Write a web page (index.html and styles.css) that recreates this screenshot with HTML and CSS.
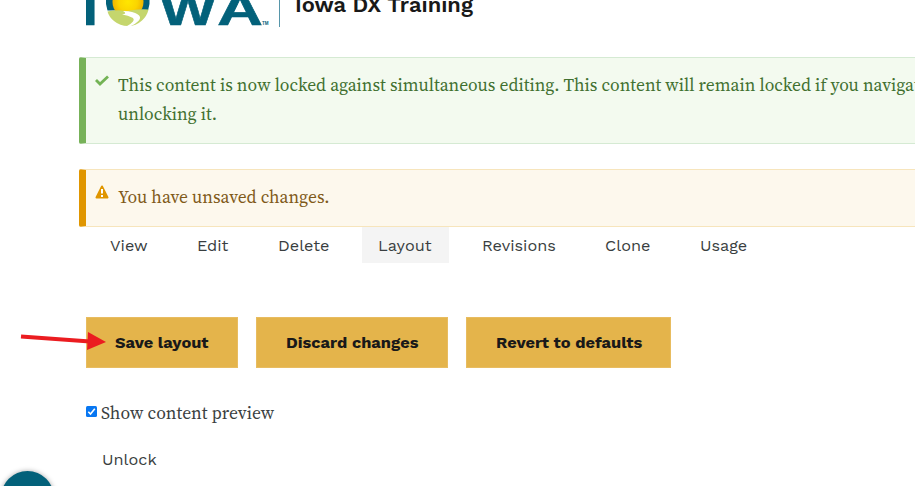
FILE: index.html
```
<!DOCTYPE html>
<html lang="en">
<head>
<meta charset="utf-8">
<title>Iowa DX Training</title>
<link rel="stylesheet" href="styles.css">
</head>
<body>
<header class="brand">
  <svg class="logo" viewBox="0 0 184 27" role="img" aria-label="Iowa">
    <defs>
      <radialGradient id="sun"><stop offset="0" stop-color="#ffe600"/><stop offset=".6" stop-color="#fbd500"/><stop offset="1" stop-color="#efb400"/></radialGradient>
    </defs>
    <g class="logo-text">
      <text x="-4" y="25" textLength="16" lengthAdjust="spacingAndGlyphs">I</text>
      <text x="74" y="25" textLength="56" lengthAdjust="spacingAndGlyphs">W</text>
      <text x="131" y="25" textLength="46" lengthAdjust="spacingAndGlyphs">A</text>
    </g>
    <path d="M20 0V4L21.500 10.500H62L63.500 4V0Z" fill="#03617a"/>
    <circle cx="42" cy="2" r="15.500" fill="url(#sun)"/>
    <path d="M21.500 11.500Q31 9.500 41 11Q53 8.500 62.500 9.500Q61 16 56 20.500Q50 26 42 26Q34 26 28 21Q23 17 21.500 11.500Z" fill="#c5d66d"/>
    <path d="M37 11Q43 11 46 12Q53 14 54 17Q55 21 45 26H41Q50 21 47 18Q42 15 36 14.500Q42 13.500 37 11Z" fill="#fff"/>
    <text class="tm" x="176" y="24.500">TM</text>
  </svg>
  <div class="site-name"><span>Iowa DX Training</span></div>
</header>
<main>
  <section class="message success">
    <svg class="check" viewBox="0 0 14 11"><path d="M1 5 5 9 13 1.500" fill="none" stroke="#73b355" stroke-width="2.800"/></svg>
    <p>This content is now locked against simultaneous editing. This content will remain locked if you navigate<br>unlocking it.</p>
  </section>
  <section class="message warning">
    <svg class="alert" viewBox="0 0 14 14"><path d="M7 1.500 12.500 12.500H1.500Z" fill="#e09600" stroke="#e09600" stroke-width="2" stroke-linejoin="round"/><path d="M7 4V8.500M7 10V12" stroke="#fff" stroke-width="2"/></svg>
    <p>You have unsaved changes.</p>
  </section>
  <nav class="tabs">
    <a class="view">View</a><a class="edit">Edit</a><a class="delete">Delete</a><a class="layout">Layout</a><a class="revisions">Revisions</a><a class="clone">Clone</a><a class="usage">Usage</a>
  </nav>
  <div class="actions">
    <button class="save">Save layout</button><button class="discard">Discard changes</button><button class="revert">Revert to defaults</button>
  </div>
  <div class="preview">
    <svg class="checkbox" viewBox="0 0 11 11"><rect width="11" height="11" rx="1.500" fill="#0877f2"/><path d="M2.300 5.700 4.500 8 8.800 2.800" fill="none" stroke="#fff" stroke-width="1.600"/></svg>
    <span>Show content preview</span>
  </div>
  <a class="unlock">Unlock</a>
</main>
<svg class="pointer" viewBox="0 0 90 24"><path d="M1 5.500 70 10.500" stroke="#eb1c20" stroke-width="3.800"/><path d="M68 1 86 11 67 19Z" fill="#eb1c20"/></svg>
<div class="help"></div>
</body>
</html>
```

FILE: styles.css
```
* { box-sizing: border-box; }
body { margin: 0; width: 915px; height: 486px; overflow: hidden; position: relative; background: #fff; color: #393e40; font: 16.3px "Work Sans", "Open Sans", sans-serif; }
.brand { display: flex; height: 57px; padding-left: 86px; }
.logo { width: 184px; height: 27px; }
.logo-text { font: bold 44px "Liberation Sans", sans-serif; fill: #03617a; stroke: #03617a; stroke-width: .5px; }
.tm { font: bold 4.500px "Liberation Sans", sans-serif; fill: #03617a; }
.site-name { height: 36px; margin: -9px 0 0 9px; padding-left: 15px; border-left: 1px solid #5796aa; color: #191919; font-size: 21.9px; font-weight: 600; line-height: 28px; white-space: nowrap; }
.site-name span { display: block; }
main { padding-left: 79px; }
.message { display: flex; align-items: flex-start; border: 1px solid; border-left-width: 7px; border-right: 0; border-radius: 2px 0 0 2px; padding-left: 9px; font-family: "Source Serif 4", "Source Serif Pro", "Source Serif", "Noto Serif", "Liberation Serif", serif; font-size: 17.57px; line-height: 29px; white-space: nowrap; }
.message svg { flex-shrink: 0; }
.message p { margin: 0 0 0 9px; }
.success { height: 87px; padding-top: 13px; background: #f3faef; border-color: #d5ead3; border-left-color: #77b259; color: #41702f; }
.warning { height: 58px; margin-top: 25px; padding-top: 13px; background: #fdf8ed; border-color: #f7e5bc; border-left-color: #e09600; color: #805a19; }
.check { width: 14px; height: 11px; margin-top: 4px; }
.alert { width: 14px; height: 14px; margin-top: 2px; }
.tabs { display: flex; height: 36px; padding-left: 15px; line-height: 38px; }
.tabs a { padding-left: 16px; margin-right: 17px; white-space: nowrap; }
.view { width: 70px; }
.edit { width: 64px; }
.delete { width: 83px; }
.layout { width: 87px; background: #f4f4f4; }
.revisions { width: 106px; }
.clone { width: 78px; }
.usage { width: 79px; }
.actions { display: flex; gap: 18px; margin: 54px 0 0 7px; }
.actions button { height: 51px; padding: 0 0 0 28px; border: 1px solid #e8bc60; background: #e4b44b; color: #191919; font: 700 16.4px/50px "Work Sans", "Open Sans", sans-serif; text-align: left; white-space: nowrap; }
.save { width: 152px; }
.actions .discard { width: 192px; padding-left: 29px; }
.actions .revert { width: 205px; padding-left: 29px; }
.preview { display: flex; align-items: center; height: 30px; margin: 29px 0 0 7px; gap: 4px; font: 17.6px "Source Serif 4", "Source Serif Pro", "Source Serif", "Noto Serif", "Liberation Serif", serif; }
.preview span { padding-top: 1px; }
.checkbox { width: 11px; height: 11px; margin-top: -1px; }
.unlock { display: block; margin: 17px 0 0 23px; line-height: 31px; }
.pointer { position: absolute; left: 20px; top: 331px; width: 90px; height: 24px; }
.help { position: absolute; left: 1px; top: 471px; width: 53px; height: 53px; border-radius: 50%; background: #03617a; box-shadow: 0 0 5px #aaa; }
```
